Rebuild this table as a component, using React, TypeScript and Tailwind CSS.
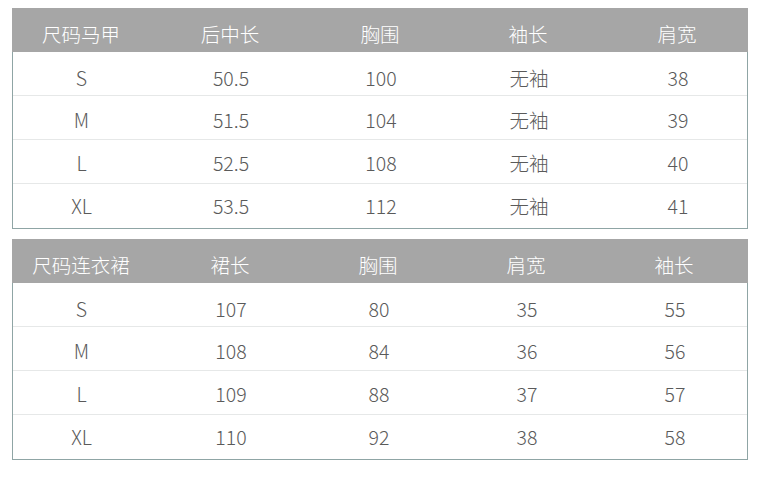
import React from "react";

type TableProps = {
  headers: string[];
  rows: string[][];
  cols: string;
};

const rowPad = ["pt-[8px]", "pt-[5px]", "pt-[3px]", "pt-0"];

function SizeTable({ headers, rows, cols }: TableProps) {
  return (
    <div className="w-[736px]">
      <div className={`grid ${cols} h-[44px] bg-[#a6a6a6] text-white`}>
        {headers.map((h, i) => (
          <div key={i} className="flex items-center justify-center pt-[7px] text-[19.5px] font-light leading-none">
            {h}
          </div>
        ))}
      </div>
      <div className="border-x border-b border-[#8fa5a5] divide-y divide-[#e6e8e8]">
        {rows.map((r, ri) => (
          <div key={ri} className={`grid ${cols} h-[44px] text-[#5a5a5a]`}>
            {r.map((c, ci) => (
              <div key={ci} className={`flex items-center justify-center ${rowPad[ri]} text-[19.5px] font-light leading-none ${ci === 0 ? "-ml-px" : ""}`}>
                {c}
              </div>
            ))}
          </div>
        ))}
      </div>
    </div>
  );
}

export default function App() {
  return (
    <div
      className="w-[761px] h-[479px] bg-white pt-[8px] pl-[12px] flex flex-col gap-[10px]"
      style={{ fontFamily: '"Noto Sans CJK SC", "Noto Sans", sans-serif' }}
    >
      <SizeTable
        cols="grid-cols-[138px_160px_140px_156px_142px]"
        headers={["尺码马甲", "后中长", "胸围", "袖长", "肩宽"]}
        rows={[
          ["S", "50.5", "100", "无袖", "38"],
          ["M", "51.5", "104", "无袖", "39"],
          ["L", "52.5", "108", "无袖", "40"],
          ["XL", "53.5", "112", "无袖", "41"],
        ]}
      />
      <SizeTable
        cols="grid-cols-[138px_160px_136px_160px_136px]"
        headers={["尺码连衣裙", "裙长", "胸围", "肩宽", "袖长"]}
        rows={[
          ["S", "107", "80", "35", "55"],
          ["M", "108", "84", "36", "56"],
          ["L", "109", "88", "37", "57"],
          ["XL", "110", "92", "38", "58"],
        ]}
      />
    </div>
  );
}
